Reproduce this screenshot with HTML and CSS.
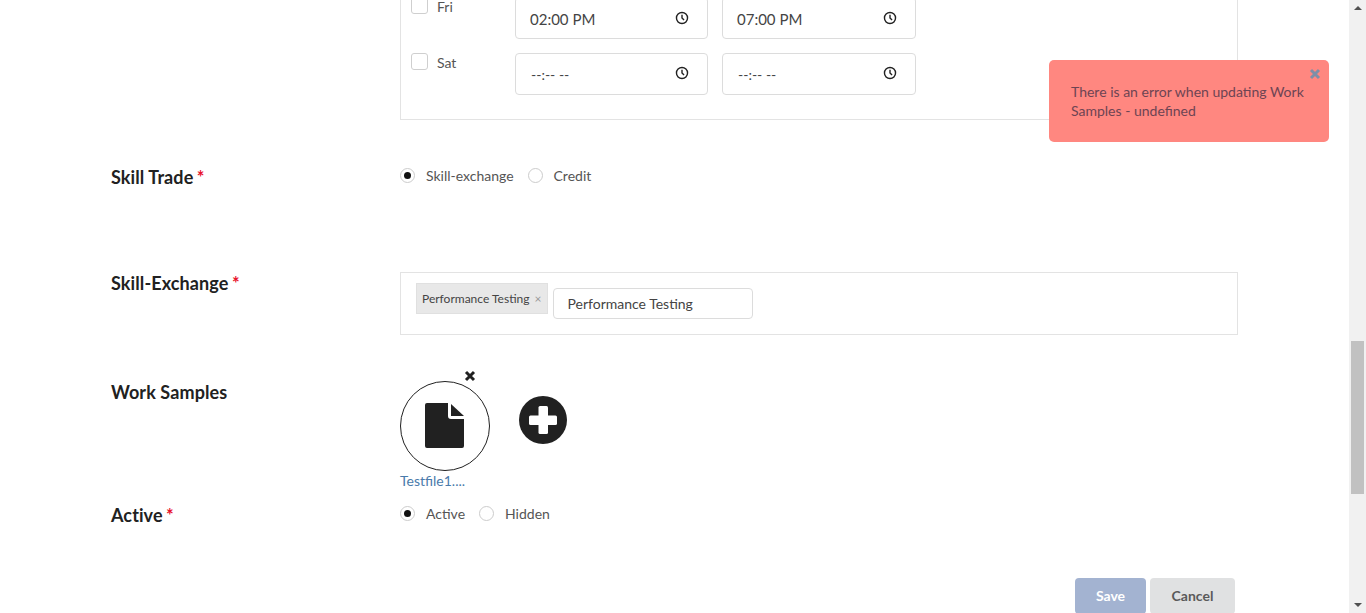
FILE: index.html
```html
<!DOCTYPE html>
<html lang="en">
<head>
    <meta charset="UTF-8">
    <title>Share Skill</title>
    <link rel="stylesheet" href="styles.css">
</head>
<body>

    <div class="page">
      <main class="form">

        <!-- Availability, scrolled partly out of view -->
        <div class="row row-days">
          <div class="label"></div>
          <div class="days">
            <div class="day">
              <span class="check"></span>
              <span class="day-name">Fri</span>
              <div class="time time-filled">02:00 PM <svg class="clock" viewBox="0 0 24 24"><circle cx="12" cy="12" r="9.5"/><path d="M12 6.5V12l3.5 3.5"/></svg></div>
              <div class="time time-filled">07:00 PM <svg class="clock" viewBox="0 0 24 24"><circle cx="12" cy="12" r="9.5"/><path d="M12 6.5V12l3.5 3.5"/></svg></div>
            </div>
            <div class="day">
              <span class="check"></span>
              <span class="day-name">Sat</span>
              <div class="time time-empty">--:-- -- <svg class="clock" viewBox="0 0 24 24"><circle cx="12" cy="12" r="9.5"/><path d="M12 6.5V12l3.5 3.5"/></svg></div>
              <div class="time time-empty">--:-- -- <svg class="clock" viewBox="0 0 24 24"><circle cx="12" cy="12" r="9.5"/><path d="M12 6.5V12l3.5 3.5"/></svg></div>
            </div>
          </div>
        </div>

        <div class="row row-trade">
          <div class="label">Skill Trade <span class="req">*</span></div>
          <div class="radios">
            <span class="radio radio-on"></span><span class="radio-text">Skill-exchange</span>
            <span class="radio"></span><span class="radio-text">Credit</span>
          </div>
        </div>

        <div class="row row-exchange">
          <div class="label">Skill-Exchange <span class="req">*</span></div>
          <div class="tags">
            <span class="tag">Performance Testing <span class="tag-x">×</span></span>
            <div class="tag-input">Performance Testing</div>
          </div>
        </div>

        <div class="row row-samples">
          <div class="label">Work Samples</div>
          <div class="samples">
            <div class="sample">
              <div class="sample-circle">
                <svg class="file-icon" viewBox="0 0 39 45"><path d="M2 0h21v13a3 3 0 0 0 3 3h13v27a2 2 0 0 1-2 2H2a2 2 0 0 1-2-2V2a2 2 0 0 1 2-2z"/><path d="M26 1l13 12H26z"/></svg>
                <svg class="remove" viewBox="0 0 12 12"><path d="M2 2l8 8M10 2l-8 8"/></svg>
              </div>
              <a class="sample-name">Testfile1....</a>
            </div>
            <svg class="add" viewBox="0 0 48 48"><circle cx="24" cy="24" r="24"/><rect x="10" y="19.5" width="28" height="9.5" rx="1.5"/><rect x="19.5" y="10" width="9.5" height="28" rx="1.5"/></svg>
          </div>
        </div>

        <div class="row row-active">
          <div class="label">Active <span class="req">*</span></div>
          <div class="radios">
            <span class="radio radio-on"></span><span class="radio-text">Active</span>
            <span class="radio"></span><span class="radio-text">Hidden</span>
          </div>
        </div>

        <div class="buttons">
          <button class="btn btn-save">Save</button>
          <button class="btn btn-cancel">Cancel</button>
        </div>

      </main>

      <div class="scrollbar">
        <span class="arrow arrow-up"></span>
        <div class="track"><div class="thumb"></div></div>
        <span class="arrow arrow-down"></span>
      </div>
    </div>

    <div class="toast">
      <svg class="toast-x" viewBox="0 0 12 12"><path d="M2 2l8 8M10 2l-8 8"/></svg>
      There is an error when updating Work Samples - undefined
    </div>

</body>
</html>
```

FILE: styles.css
```css
html, body {
    margin: 0;
    height: 613px;
    overflow: hidden;
}

body {
    background-color: #fff;
    color: #212121;
    font-family: Lato, 'Liberation Sans', sans-serif;
    font-size: 14px;
}

.page {
    display: flex;
    height: 613px;
}

.form {
    flex: 1;
    min-width: 0;
    overflow: hidden;
    padding: 0 111px;
}

.row {
    display: flex;
}

.label {
    width: 289px;
    flex: none;
    font-size: 18px;
    font-weight: 700;
    line-height: 22px;
    letter-spacing: 0.1px;
}

.req {
    color: #e8112d;
    font-size: 18px;
    font-weight: 700;
    margin-left: -1px;
}

/* availability */
.row-days {
    margin-top: -30px;
}

.days {
    width: 838px;
    height: 150px;
    box-sizing: border-box;
    border: 1px solid #e3e3e3;
    border-top: 0;
    padding: 27px 0 0 10px;
}

.day {
    display: flex;
    margin-bottom: 14px;
    height: 42px;
}

.check {
    width: 15px;
    height: 15px;
    border: 1px solid #cfcfcf;
    border-radius: 3px;
    margin-right: 9px;
    flex: none;
}

.day-name {
    width: 78px;
    padding-top: 2px;
    line-height: 16px;
    color: #555;
}

.time {
    width: 193px;
    height: 42px;
    box-sizing: border-box;
    border: 1px solid #dcdcdc;
    border-radius: 4px;
    margin-right: 14px;
    padding-left: 15px;
    display: flex;
    align-items: center;
    justify-content: space-between;
    font-size: 15px;
    color: #444;
}

.time:last-child {
    width: 194px;
}

.time-filled {
    padding: 2px 0 0 14px;
}

.time-empty {
    font-size: 14px;
}

.clock {
    width: 14px;
    height: 14px;
    margin: -2px 18px 0 0;
    fill: none;
    stroke: #212121;
    stroke-width: 2.4;
}

/* radios */
.radios {
    display: flex;
    align-items: center;
    height: 16px;
    margin-top: 1px;
    color: #555;
}

.radio {
    width: 15px;
    height: 15px;
    box-sizing: border-box;
    border: 1px solid #ccc;
    border-radius: 50%;
    margin-right: 11px;
    position: relative;
}

.radio-on::after {
    content: "";
    position: absolute;
    left: 3px;
    top: 3px;
    width: 7px;
    height: 7px;
    border-radius: 50%;
    background-color: #111;
}

.radio-text {
    margin-right: 14px;
}

.row-trade {
    margin-top: 46px;
}

/* skill exchange tags */
.row-exchange {
    margin-top: 84px;
}

.tags {
    width: 838px;
    height: 63px;
    box-sizing: border-box;
    border: 1px solid #e3e3e3;
    padding: 10px 15px;
    display: flex;
    align-items: flex-start;
}

.tag {
    height: 31px;
    box-sizing: border-box;
    background-color: #e8e8e8;
    border: 1px solid #e0e0e0;
    padding: 0 5px;
    font-size: 12px;
    line-height: 29px;
    color: #444;
    margin-right: 5px;
}

.tag-x {
    color: #999;
    margin-left: 2px;
}

.tag-input {
    width: 200px;
    height: 31px;
    box-sizing: border-box;
    border: 1px solid #dcdcdc;
    border-radius: 4px;
    margin-top: 5px;
    padding-left: 14px;
    line-height: 30px;
    color: #444;
}

/* work samples */
.row-samples {
    margin-top: 46px;
}

.samples {
    display: flex;
    align-items: flex-start;
}

.sample {
    width: 119px;
}

.sample-circle {
    width: 90px;
    height: 90px;
    box-sizing: border-box;
    border: 1px solid #212121;
    border-radius: 50%;
    display: flex;
    align-items: center;
    justify-content: center;
    position: relative;
}

.file-icon {
    width: 39px;
    height: 45px;
    margin: -2px 2px 0 0;
    fill: #212121;
}

.remove {
    position: absolute;
    right: 13px;
    top: -12px;
    width: 12px;
    height: 12px;
    fill: none;
    stroke: #212121;
    stroke-width: 3;
}

.sample-name {
    display: block;
    margin-top: 1px;
    line-height: 17px;
    color: #4a7bab;
}

.add {
    width: 48px;
    height: 48px;
    margin-top: 15px;
    fill: #212121;
}

.add rect {
    fill: #fff;
}

.row-active {
    margin-top: 15px;
}

.buttons {
    display: flex;
    justify-content: flex-end;
    gap: 4px;
    margin: 52px 3px 0 0;
}

.btn {
    height: 36px;
    border: 0;
    border-radius: 4px;
    padding: 0 0 2px;
    font-family: inherit;
    font-size: 14px;
    font-weight: 700;
}

.btn-save {
    width: 71px;
    background-color: #a3b3d1;
    color: #fff;
}

.btn-cancel {
    width: 85px;
    background-color: #e0e1e2;
    color: #5a5a5a;
}

/* browser scrollbar */
.scrollbar {
    width: 17px;
    flex: none;
    background-color: #f1f1f1;
    display: flex;
    flex-direction: column;
    align-items: center;
}

.track {
    flex: 1;
    width: 100%;
}

.thumb {
    width: 13px;
    height: 153px;
    margin: 325px auto 0;
    background-color: #c1c1c1;
}

.arrow {
    width: 0;
    height: 0;
    margin: 6px 0;
    border-left: 4px solid transparent;
    border-right: 4px solid transparent;
}

.arrow-up {
    border-bottom: 4px solid #505050;
}

.arrow-down {
    border-top: 4px solid #505050;
}

/* error toast */
.toast {
    position: absolute;
    left: 1049px;
    top: 60px;
    width: 280px;
    height: 82px;
    box-sizing: border-box;
    padding: 22px 18px 0 22px;
    background-color: #ff8780;
    border-radius: 5px;
    line-height: 19px;
    color: #6d4453;
}

.toast-x {
    position: absolute;
    right: 8px;
    top: 8px;
    width: 12px;
    height: 12px;
    fill: none;
    stroke: #7d8fa8;
    stroke-width: 3;
}
```
